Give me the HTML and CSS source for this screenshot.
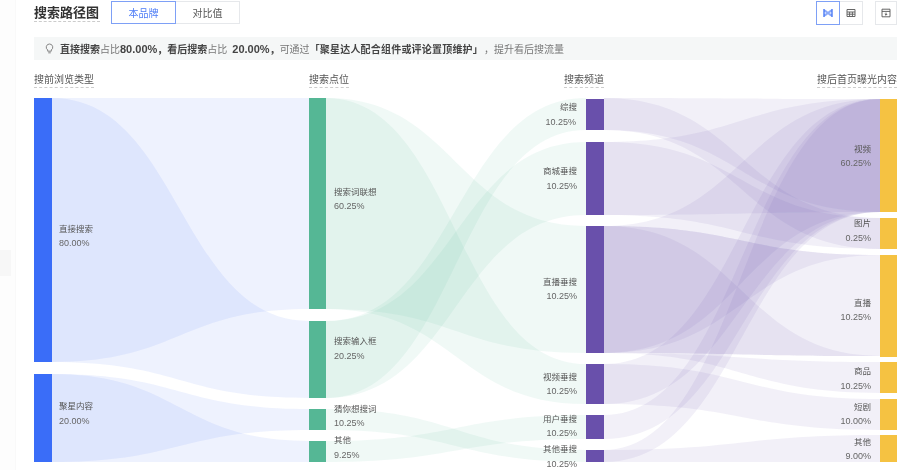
FILE: index.html
```html
<!DOCTYPE html>
<html lang="zh">
<head>
<meta charset="utf-8">
<title>搜索路径图</title>
<link rel="stylesheet" href="styles.css">
</head>
<body>
<div class="page">
  <aside class="rail"><span class="rail-tab"></span></aside>
  <main class="panel">
    <header class="head">
      <h1 class="title">搜索路径图</h1>
      <div class="tabs">
        <button class="tab tab-on">本品牌</button>
        <button class="tab">对比值</button>
      </div>
      <div class="tools">
        <button class="tool tool-on" aria-label="桑基图">
          <svg viewBox="0 0 10 10" class="ico"><path d="M1 1v8M9 1v8" fill="none" stroke="#4d7cf6" stroke-width="1.4"/><path d="M1 1.5C4 1.5 6 6 9 6V8.5C6 8.5 4 4 1 4ZM1 6C4 6 6 1.5 9 1.5V4C6 4 4 8.5 1 8.5Z" fill="#4d7cf6" fill-opacity=".65"/></svg>
        </button>
        <button class="tool tool-mid" aria-label="表格">
          <svg viewBox="0 0 10 10" class="ico"><path d="M1 1.5h8v7H1zM1 4h8M1 6.2h8M3.6 4v4.5M6.4 4v4.5" fill="none" stroke="#666" stroke-width="1"/></svg>
        </button>
        <button class="tool tool-save" aria-label="保存">
          <svg viewBox="0 0 10 10" class="ico"><path d="M1 1.2h8v7.6H1zM1 3.4h8M5 4.6v2.6M3.8 6 5 7.2 6.2 6" fill="none" stroke="#555" stroke-width=".9"/></svg>
        </button>
      </div>
    </header>

    <p class="tip">
      <svg viewBox="0 0 10 12" class="bulb"><path d="M5 1a3.6 3.6 0 0 0-2 6.6V9h4V7.6A3.6 3.6 0 0 0 5 1zM3.6 10.8h2.8" fill="none" stroke="#777" stroke-width="1"/></svg>
      <b>直接搜索</b><span class="soft">占比</span><b class="num">80.00%</b><b>，看后搜索</b><span class="soft">占比</span><b class="num num-gap">20.00%</b><b>，</b><span class="soft">可通过</span><b class="quote">「聚星达人配合组件或评论置顶维护」</b><span class="soft comma">，</span><span class="soft">提升看后搜流量</span>
    </p>

    <div class="cols">
      <span class="col">搜前浏览类型</span>
      <span class="col">搜索点位</span>
      <span class="col col-end">搜索频道</span>
      <span class="col col-end">搜后首页曝光内容</span>
    </div>

    <svg class="sankey" viewBox="34 92 863 378" width="863" height="378">
      <g class="links-blue">
        <path d="M52 98C180 98 180 98 309 98L309 309C180 309 180 362 52 362Z"/>
        <path d="M52 98C180 98 180 321 309 321L309 398C180 398 180 362 52 362Z"/>
        <path d="M52 374C180 374 180 409 309 409L309 430C180 430 180 462 52 462Z"/>
        <path d="M52 374C180 374 180 441 309 441L309 462C180 462 180 462 52 462Z"/>
      </g>
      <g class="links-green">
        <path d="M326 98C456 98 456 226 586 226L586 353C456 353 456 309 326 309Z"/>
        <path d="M326 98C456 98 456 364 586 364L586 404C456 404 456 309 326 309Z"/>
        <path d="M326 321C456 321 456 98 586 98L586 130C456 130 456 398 326 398Z"/>
        <path d="M326 321C456 321 456 142 586 142L586 215C456 215 456 398 326 398Z"/>
        <path d="M326 409C456 409 456 450 586 450L586 462C456 462 456 430 326 430Z"/>
        <path d="M326 441C456 441 456 415 586 415L586 439C456 439 456 462 326 462Z"/>
      </g>
      <g class="links-purple">
        <path d="M604 98C742 98 742 99 880 99L880 212C742 212 742 130 604 130Z"/>
        <path d="M604 98C742 98 742 218 880 218L880 249C742 249 742 130 604 130Z"/>
        <path d="M604 142C742 142 742 99 880 99L880 212C742 212 742 215 604 215Z"/>
        <path d="M604 142C742 142 742 218 880 218L880 249C742 249 742 215 604 215Z"/>
        <path d="M604 226C742 226 742 99 880 99L880 212C742 212 742 353 604 353Z"/>
        <path d="M604 226C742 226 742 255 880 255L880 255C742 255 742 353 604 353Z"/>
        <path d="M604 226C742 226 742 356 880 356L880 356C742 356 742 353 604 353Z"/>
        <path d="M604 226C742 226 742 255 880 255L880 356C742 356 742 353 604 353Z"/>
        <path d="M604 353C742 353 742 362 880 362L880 393C742 393 742 353 604 353Z"/>
        <path d="M604 364C742 364 742 99 880 99L880 212C742 212 742 404 604 404Z"/>
        <path d="M604 364C742 364 742 399 880 399L880 430C742 430 742 404 604 404Z"/>
        <path d="M604 415C742 415 742 99 880 99L880 212C742 212 742 439 604 439Z"/>
        <path d="M604 450C742 450 742 99 880 99L880 212C742 212 742 462 604 462Z"/>
        <path d="M604 450C742 450 742 435 880 435L880 462C742 462 742 462 604 462Z"/>
      </g>
      <g class="nodes-blue">
        <rect x="34" y="98" width="18" height="264"/>
        <rect x="34" y="374" width="18" height="88"/>
      </g>
      <g class="nodes-green">
        <rect x="309" y="98" width="17" height="211"/>
        <rect x="309" y="321" width="17" height="77"/>
        <rect x="309" y="409" width="17" height="21"/>
        <rect x="309" y="441" width="17" height="21"/>
      </g>
      <g class="nodes-purple">
        <rect x="586" y="99" width="18" height="31"/>
        <rect x="586" y="142" width="18" height="73"/>
        <rect x="586" y="226" width="18" height="127"/>
        <rect x="586" y="364" width="18" height="40"/>
        <rect x="586" y="415" width="18" height="24"/>
        <rect x="586" y="450" width="18" height="12"/>
      </g>
      <g class="nodes-yellow">
        <rect x="880" y="99" width="17" height="113"/>
        <rect x="880" y="218" width="17" height="31"/>
        <rect x="880" y="255" width="17" height="102"/>
        <rect x="880" y="362" width="17" height="31"/>
        <rect x="880" y="399" width="17" height="31"/>
        <rect x="880" y="435" width="17" height="27"/>
      </g>
      <g class="lab">
        <text x="59" y="232">直接搜索</text><text class="pct" x="59" y="246">80.00%</text>
        <text x="59" y="409">聚星内容</text><text class="pct" x="59" y="424">20.00%</text>
        <text x="334" y="195">搜索词联想</text><text class="pct" x="334" y="209">60.25%</text>
        <text x="334" y="344">搜索输入框</text><text class="pct" x="334" y="359">20.25%</text>
        <text x="334" y="412">猜你想搜词</text><text class="pct" x="334" y="426">10.25%</text>
        <text x="334" y="443">其他</text><text class="pct" x="334" y="458">9.25%</text>
      </g>
      <g class="lab lab-end">
        <text x="577" y="110">综搜</text><text class="pct" x="576" y="125">10.25%</text>
        <text x="577" y="174">商城垂搜</text><text class="pct" x="577" y="189">10.25%</text>
        <text x="577" y="285">直播垂搜</text><text class="pct" x="577" y="299">10.25%</text>
        <text x="577" y="380">视频垂搜</text><text class="pct" x="577" y="394">10.25%</text>
        <text x="577" y="422">用户垂搜</text><text class="pct" x="577" y="436">10.25%</text>
        <text x="577" y="452">其他垂搜</text><text class="pct" x="577" y="467">10.25%</text>
        <text x="871" y="152">视频</text><text class="pct" x="871" y="166">60.25%</text>
        <text x="871" y="226">图片</text><text class="pct" x="871" y="241">0.25%</text>
        <text x="871" y="306">直播</text><text class="pct" x="871" y="320">10.25%</text>
        <text x="871" y="374">商品</text><text class="pct" x="871" y="389">10.25%</text>
        <text x="871" y="410">短剧</text><text class="pct" x="871" y="424">10.00%</text>
        <text x="871" y="445">其他</text><text class="pct" x="871" y="459">9.00%</text>
      </g>
    </svg>
  </main>
</div>
</body>
</html>
```

FILE: styles.css
```css
* { box-sizing: border-box; }
html, body { margin: 0; height: 100%; overflow: hidden; background: #fff; }
body { font-family: "Liberation Sans", "Noto Sans CJK SC", sans-serif; color: #444; }

.page { display: flex; width: 904px; height: 470px; overflow: hidden; filter: blur(0.35px); }
.rail { width: 16px; flex: none; background: #fdfdfd; border-right: 1px solid #f9f9f9; padding-top: 250px; }
.rail-tab { display: block; width: 11px; height: 26px; background: #f7f7f7; }
.panel { flex: 1; min-width: 0; padding: 1px 7px 0 18px; background: #fff; }

.head { display: flex; align-items: center; height: 23px; }
.title { margin: 0 11px 0 0; width: 66px; font-size: 13px; font-weight: 700; line-height: 17px; color: #333; border-bottom: 1px dashed #ccc; }
.tabs { display: flex; }
.tab { width: 64px; height: 23px; padding: 0; font: 10px "Liberation Sans", "Noto Sans CJK SC", sans-serif; color: #555; background: #fff; border: 1px solid #e6e8eb; border-left: 0; }
.tab-on { width: 65px; color: #4d7cf6; border: 1px solid #7ea0f6; }
.tools { display: flex; margin-left: auto; }
.tool { display: flex; align-items: center; justify-content: center; width: 24px; height: 24px; padding: 0; background: #fff; border: 1px solid #e6e8eb; }
.tool-on { border-color: #7ea0f6; }
.tool-mid { border-left: 0; width: 23px; }
.tool-save { width: 22px; margin-left: 12px; }
.ico { width: 10px; height: 10px; }

.tip { display: flex; align-items: center; height: 23px; margin: 13px 0 0; padding-left: 11px; font-size: 10px; white-space: pre; background: #f5f7f7; color: #444; }
.tip b { font-weight: 700; }
.tip .num { font-size: 11px; }
.tip .num-gap { margin-left: 5px; }
.tip .quote { letter-spacing: 0.2px; }
.soft { color: #777; }
.comma { margin-left: 1px; }
.bulb { width: 9px; height: 11px; margin-right: 6px; }

.cols { display: grid; grid-template-columns: 275px 147px 148px 293px; height: 16px; margin-top: 13px; font-size: 10px; line-height: 13px; color: #555; }
.col { justify-self: start; height: 15px; border-bottom: 1px dashed #ccc; }
.col-end { justify-self: end; }

.sankey { display: block; margin-top: 3px; overflow: hidden; }
.links-blue path { fill: #3a6df8; fill-opacity: 0.085; }
.links-green path { fill: #55b795; fill-opacity: 0.085; }
.links-purple path { fill: #6950ab; fill-opacity: 0.085; }
.nodes-blue rect { fill: #3a6df8; }
.nodes-green rect { fill: #55b795; }
.nodes-purple rect { fill: #6950ab; }
.nodes-yellow rect { fill: #f5c242; }
.lab text { font-family: "Liberation Sans", "Noto Sans CJK SC", sans-serif; font-size: 8.5px; fill: #555; }
.lab .pct { font-size: 9px; fill: #666; }
.lab-end text { text-anchor: end; }
```
